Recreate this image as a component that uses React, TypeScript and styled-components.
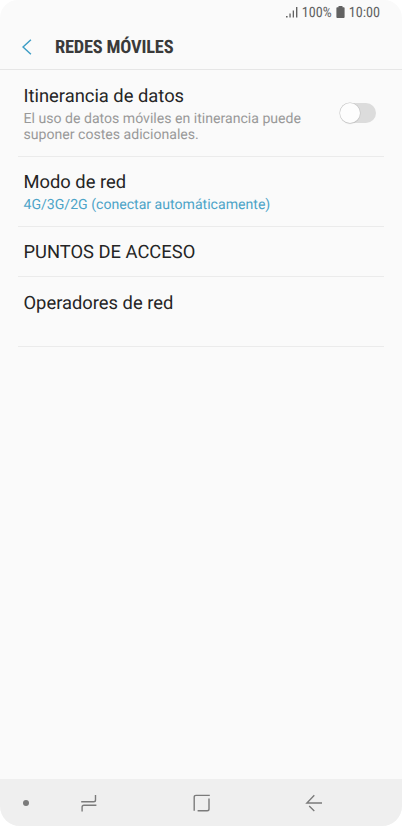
import styled, { createGlobalStyle } from "styled-components";

const GlobalStyle = createGlobalStyle`
  body {
    margin: 0;
    background: white;
    font-family: Roboto, "Liberation Sans", sans-serif;
    text-rendering: geometricPrecision;
  }

  * {
    box-sizing: border-box;
  }
`;

const Phone = styled.div`
  display: flex;
  flex-direction: column;
  width: 402px;
  height: 826px;
  border-radius: 18px 18px 20px 20px;
  overflow: hidden;
  background: #fafafa;
`;

const StatusBar = styled.div`
  display: flex;
  justify-content: flex-end;
  align-items: center;
  height: 24px;
  padding-right: 22px;
  color: #626262;

  font-size: 14.2px;
  line-height: 24px;
  font-stretch: 75%;

  svg {
    display: block;
  }
`;

const BatteryLevel = styled.span`
  margin: 1px 4px 0 4px;
`;

const Clock = styled.span`
  margin: 1px 0 0 4px;
`;

const Header = styled.header`
  display: flex;
  align-items: center;
  height: 46px;
  padding-left: 22px;
  border-bottom: 1px solid #e6e6e6;
`;

const Title = styled.h1`
  margin: 2px 0 0 23px;
  font-size: 18.4px;
  line-height: 24px;
  font-weight: 700;
  font-stretch: 75%;
  letter-spacing: -0.2px;
  color: #3a3a3a;
`;

const List = styled.main`
  flex: 1;
  padding: 0 18px;
`;

const Row = styled.div<{ $height: number; $top?: number }>`
  display: flex;
  justify-content: space-between;
  height: ${({ $height }) => $height}px;
  padding: ${({ $top = 14 }) => $top}px 8px 0 5.5px;
  border-bottom: 1px solid #ebebeb;
`;

const Label = styled.div`
  font-size: 18.35px;
  line-height: 24px;
  color: #252525;
`;

const Description = styled.div<{ $active?: boolean }>`
  margin-top: 2px;
  font-size: 14.1px;
  line-height: 16px;
  color: ${({ $active }) => ($active ? "#4da4c8" : "#999999")};
`;

const Toggle = styled.div`
  width: 36px;
  height: 20px;
  margin-top: 18px;
  border-radius: 10px;
  background: #dcdcdc;
`;

const Knob = styled.div`
  width: 20px;
  height: 20px;
  margin-left: -0.5px;
  border-radius: 50%;
  background: #fdfdfd;
  box-shadow: 0 0 0 0.5px #c4c4c4, 0 0.5px 1px rgba(0, 0, 0, 0.25);
`;

const NavBar = styled.nav`
  display: flex;
  align-items: center;
  height: 47px;
  padding: 1px 0 0 23px;
  background: #efefef;

  svg {
    display: block;
  }
`;

const NavDot = styled.span`
  width: 6px;
  height: 6px;
  border-radius: 50%;
  background: #7b7b7b;
`;

const NavIcon = styled.svg<{ $gap: number }>`
  width: 18px;
  height: 18px;
  margin-left: ${({ $gap }) => $gap}px;
  fill: none;
  stroke: #7b7b7b;
  stroke-width: 1.4;
`;

const App = () => {
  return (
    <>
      <GlobalStyle />
      <Phone>
        <StatusBar>
          <svg width="12" height="12" viewBox="0 0 12 12" fill="currentColor">
            <path d="M0 10h1.6v1.6H0zM3.4 7.4h1.3v4.2H3.4zM6.7 4.4H8v7.2H6.7zM10 1h1.4v10.6H10z" />
          </svg>
          <BatteryLevel>100%</BatteryLevel>
          <svg width="9" height="12" viewBox="0 0 9 12" fill="currentColor">
            <path d="M2.5 0h4v1.2h1.2q.9 0 .9.9v9q0 .9-.9.9H1.3q-.9 0-.9-.9v-9q0-.9.9-.9h1.2z" />
          </svg>
          <Clock>10:00</Clock>
        </StatusBar>

        <Header>
          <svg width="10" height="16" viewBox="0 0 10 16" fill="none" stroke="#3d9dc5" strokeWidth="1.5">
            <path d="M8.9.7 1 8l7.9 7.3" />
          </svg>
          <Title>REDES MÓVILES</Title>
        </Header>

        <List>
          <Row $height={87} $top={15}>
            <div>
              <Label>Itinerancia de datos</Label>
              <Description>
                El uso de datos móviles en itinerancia puede
                <br />
                suponer costes adicionales.
              </Description>
            </div>
            <Toggle>
              <Knob />
            </Toggle>
          </Row>
          <Row $height={70}>
            <div>
              <Label>Modo de red</Label>
              <Description $active>
                4G/3G/2G (conectar automáticamente)
              </Description>
            </div>
          </Row>
          <Row $height={50}>
            <Label>PUNTOS DE ACCESO</Label>
          </Row>
          <Row $height={70} $top={15}>
            <Label>Operadores de red</Label>
          </Row>
        </List>

        <NavBar>
          <NavDot />
          <NavIcon $gap={51} viewBox="0 0 18 18">
            <path d="M1.2 7.7h12.5q1.8 0 1.8-1.8V1M16.4 11.3H3.9q-1.8 0-1.8 1.8v4.3" />
          </NavIcon>
          <NavIcon $gap={95} viewBox="0 0 18 18">
            <path d="M1.2 16.8V3.2q0-1.8 1.8-1.8h13.8M16 4.6v10.4q0 1.8-1.8 1.8H4.6" />
          </NavIcon>
          <NavIcon $gap={94} viewBox="0 0 18 18">
            <path d="M9.3 1.3 1.9 9H17M4.2 11.9l5.1 5" />
          </NavIcon>
        </NavBar>
      </Phone>
    </>
  );
};

export default App;
